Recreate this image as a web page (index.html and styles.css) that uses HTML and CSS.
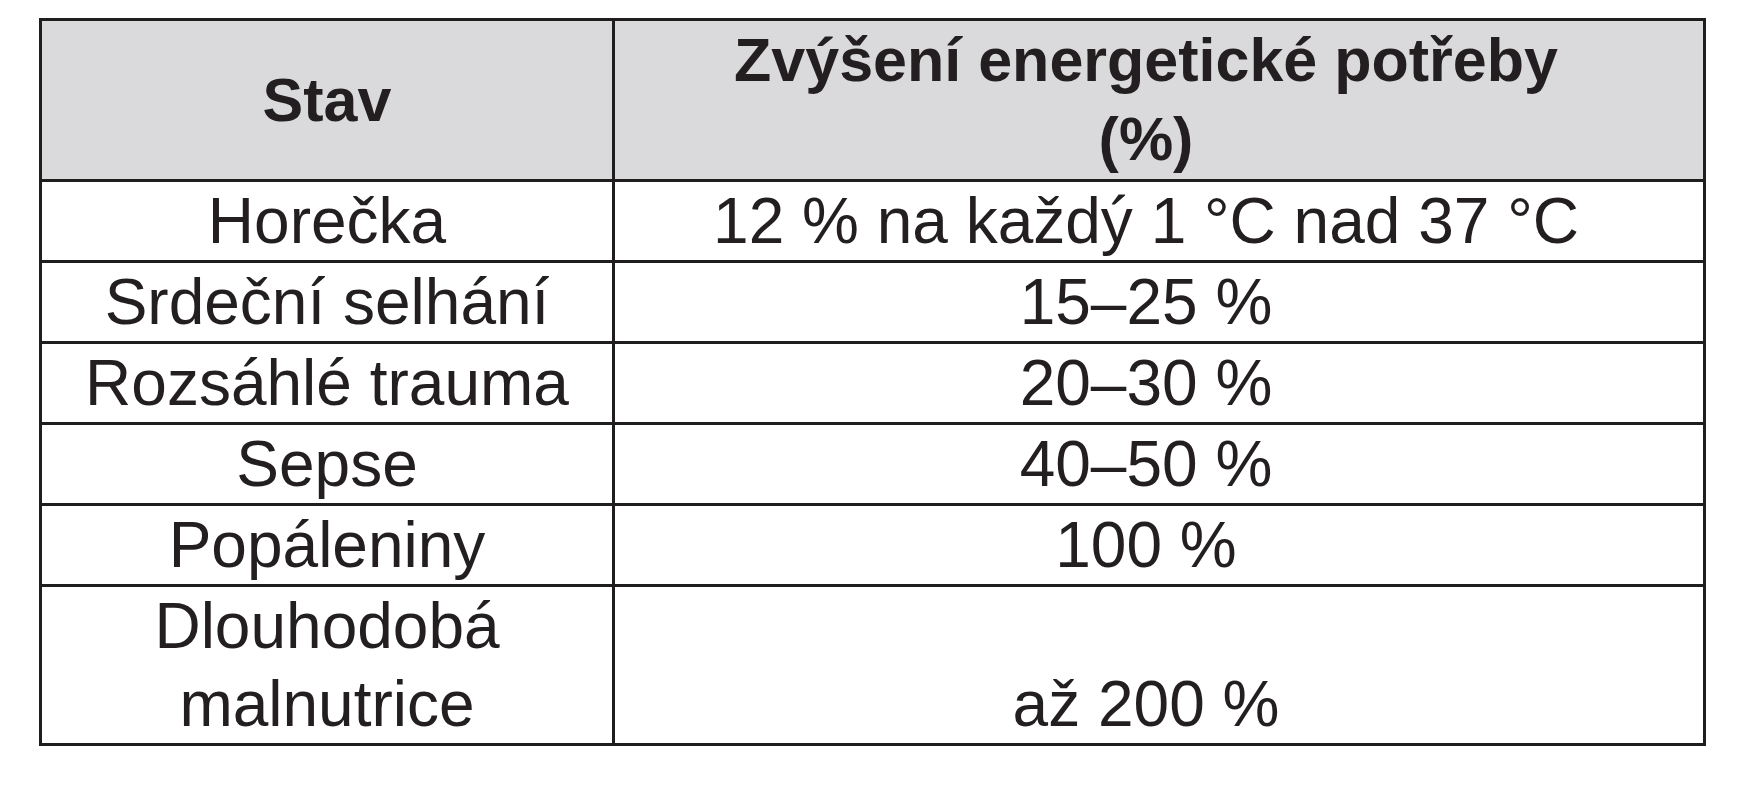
FILE: index.html
```html
<!DOCTYPE html>
<html lang="cs">
<head>
<meta charset="utf-8">
<title>Zvýšení energetické potřeby</title>
<link rel="stylesheet" href="styles.css">
</head>
<body>
<table class="energy">
  <thead>
    <tr>
      <th class="col-state">Stav</th>
      <th class="col-value">Zvýšení energetické potřeby<br>(%)</th>
    </tr>
  </thead>
  <tbody>
    <tr><td class="col-state">Horečka</td><td class="col-value">12 % na každý 1 °C nad 37 °C</td></tr>
    <tr><td class="col-state">Srdeční selhání</td><td class="col-value">15–25 %</td></tr>
    <tr><td class="col-state">Rozsáhlé trauma</td><td class="col-value">20–30 %</td></tr>
    <tr><td class="col-state">Sepse</td><td class="col-value">40–50 %</td></tr>
    <tr><td class="col-state">Popáleniny</td><td class="col-value">100 %</td></tr>
    <tr><td class="col-state last">Dlouhodobá<br>malnutrice</td><td class="col-value bottom">až 200 %</td></tr>
  </tbody>
</table>
</body>
</html>
```

FILE: styles.css
```css
html, body {
  margin: 0;
  padding: 0;
  background: #ffffff;
}

body {
  padding: 18px 0 0 39px;
  font-family: "Liberation Sans", Arial, sans-serif;
  color: #231f20;
}

.energy {
  border-collapse: collapse;
  width: 1667px;
  table-layout: fixed;
}

.energy th,
.energy td {
  border: 3px solid #1f1d1e;
  padding: 0;
  text-align: center;
  vertical-align: middle;
}

.energy th {
  background: #dadadc;
  font-weight: bold;
  font-size: 61px;
  line-height: 79px;
  height: 158px;
}

.energy td {
  font-size: 64px;
  line-height: 78px;
  height: 78px;
}

.energy .col-state {
  width: 570px;
}

.energy .col-value {
  padding-right: 26px;
}

.energy td.bottom {
  vertical-align: bottom;
}

.energy td.last {
  position: relative;
}

.energy td.last::after {
  content: "";
  position: absolute;
  right: -2px;
  bottom: -6px;
  width: 3px;
  height: 5px;
  background: #1f1d1e;
}
```
